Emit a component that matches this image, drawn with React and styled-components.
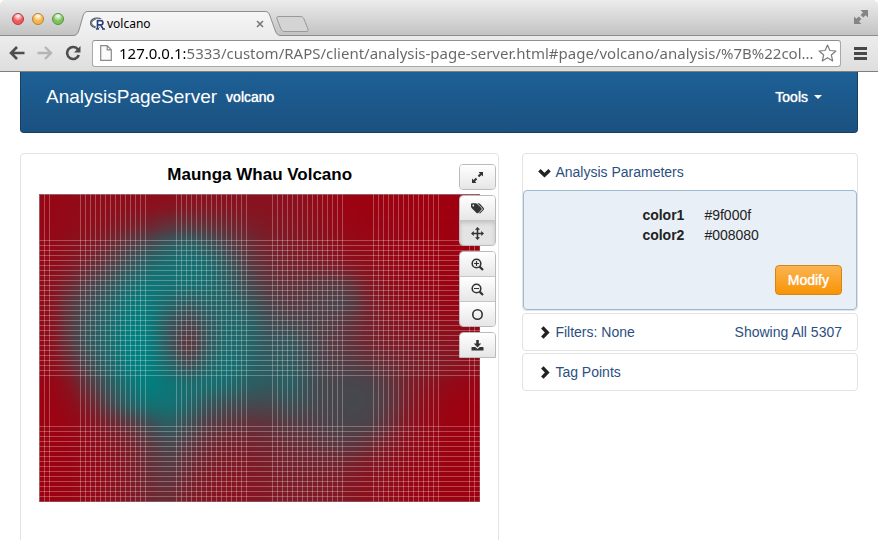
import React, { useState } from 'react';
import styled, { createGlobalStyle } from 'styled-components';

// height of the terrain on a coarse grid, 0 = lowest, 100 = highest
const terrain = [
  [5, 7, 10, 10, 10, 11, 12, 14, 14, 14, 14, 13, 12, 10, 6, 2, 2, 2, 1, 0, 0, 0],
  [5, 8, 10, 14, 20, 26, 36, 38, 34, 28, 22, 18, 16, 13, 8, 4, 3, 3, 2, 1, 1, 0],
  [6, 12, 16, 30, 46, 58, 72, 78, 66, 50, 34, 24, 20, 17, 13, 8, 6, 5, 4, 2, 1, 0],
  [8, 16, 30, 46, 64, 80, 86, 88, 84, 66, 46, 32, 26, 24, 20, 14, 10, 7, 5, 3, 2, 1],
  [10, 30, 50, 64, 82, 92, 88, 88, 84, 74, 56, 42, 38, 42, 46, 42, 18, 10, 8, 5, 3, 2],
  [10, 42, 60, 76, 94, 94, 80, 68, 78, 78, 68, 52, 44, 48, 52, 52, 26, 14, 10, 8, 5, 4],
  [8, 44, 66, 82, 98, 96, 66, 50, 70, 82, 78, 60, 56, 52, 48, 40, 26, 18, 15, 12, 9, 7],
  [8, 42, 68, 82, 100, 98, 66, 36, 70, 84, 78, 66, 70, 56, 46, 40, 28, 22, 20, 18, 14, 10],
  [6, 30, 58, 80, 98, 100, 80, 56, 80, 88, 78, 70, 72, 60, 50, 48, 42, 34, 26, 22, 18, 12],
  [3, 14, 44, 70, 90, 100, 92, 86, 88, 84, 74, 70, 76, 62, 54, 56, 54, 42, 24, 14, 8, 4],
  [2, 8, 24, 54, 78, 90, 90, 80, 66, 60, 58, 56, 62, 58, 54, 56, 56, 44, 20, 8, 3, 1],
  [2, 5, 12, 26, 40, 60, 74, 60, 46, 40, 38, 40, 46, 48, 52, 54, 52, 36, 14, 6, 2, 1],
  [2, 3, 8, 14, 24, 42, 56, 44, 32, 26, 26, 30, 34, 36, 42, 44, 34, 20, 10, 5, 2, 1],
  [1, 3, 7, 12, 20, 36, 48, 34, 24, 20, 20, 24, 27, 28, 28, 26, 18, 12, 7, 4, 2, 1],
  [1, 3, 7, 12, 18, 32, 40, 26, 18, 16, 17, 20, 22, 22, 20, 18, 13, 9, 5, 3, 2, 1],
  [1, 3, 7, 11, 16, 28, 32, 20, 16, 13, 14, 18, 20, 20, 18, 15, 11, 8, 5, 3, 2, 1],
];
const CELL = 20;

const low = [159, 0, 15];
const high = [0, 128, 128];
const mix = value =>
  `rgb(${low.map((c, i) => Math.round(c + ((high[i] - c) * value) / 100)).join(',')})`;

const steps = (from, to) => {
  const list = [];
  for (let n = from; n <= to; n += 5) list.push(n);
  return list;
};
const columnLines = [
  ...steps(5, 10),
  ...steps(41, 106),
  ...steps(137, 207),
  ...steps(233, 303),
  ...steps(334, 399),
  ...steps(430, 435),
];
const rowLines = [...steps(46, 181), ...steps(232, 302)];

const clamp = (n, max) => Math.max(0, Math.min(max, n));

const VolcanoPlot = () => {
  const cells = [];
  // one extra ring of cells so that the smoothing does not fade at the edges
  for (let r = -2; r < terrain.length + 2; r++) {
    for (let c = -2; c < terrain[0].length + 2; c++) {
      const value = terrain[clamp(r, terrain.length - 1)][clamp(c, terrain[0].length - 1)];
      cells.push(
        <rect
          key={`${r}/${c}`}
          x={c * CELL}
          y={r * CELL}
          width={CELL + 1}
          height={CELL + 1}
          fill={mix(value)}
        />
      );
    }
  }
  return (
    <Plot viewBox="0 0 441 308" role="img" aria-label="Maunga Whau Volcano">
      <defs>
        <filter
          id="smooth"
          filterUnits="userSpaceOnUse"
          x="-40"
          y="-40"
          width="520"
          height="400"
          colorInterpolationFilters="sRGB"
        >
          <feGaussianBlur stdDeviation="8" />
        </filter>
      </defs>
      <g filter="url(#smooth)">{cells}</g>
      <g stroke="#fff" strokeOpacity="0.27" shapeRendering="crispEdges">
        {columnLines.map(x => (
          <line key={x} x1={x + 0.5} x2={x + 0.5} y1="0" y2="308" />
        ))}
        {rowLines.map(y => (
          <line key={y} x1="0" x2="441" y1={y + 0.5} y2={y + 0.5} />
        ))}
      </g>
      <rect
        x="0.5"
        y="0.5"
        width="440"
        height="307"
        fill="none"
        stroke="#999"
        strokeOpacity="0.6"
      />
    </Plot>
  );
};

const BrowserWindow = () => (
  <Chrome>
    <TabStrip>
      <Lights>
        <Light type="button" aria-label="Close window" $tone="#f0575a" $edge="#b23a3e" />
        <Light type="button" aria-label="Minimize window" $tone="#f7b544" $edge="#b98233" />
        <Light type="button" aria-label="Zoom window" $tone="#7cc35a" $edge="#57913f" />
      </Lights>
      <Tab>
        <TabShape viewBox="0 0 206 25" preserveAspectRatio="none" aria-hidden="true">
          <defs>
            <linearGradient id="tabFill" x1="0" y1="0" x2="0" y2="1">
              <stop offset="0" stopColor="#f6f6f6" />
              <stop offset="1" stopColor="#ececec" />
            </linearGradient>
          </defs>
          <path
            d="M0 24.500 C3 24 4 22 5 19 L9 5 C10 2 11 .5 14 .5 H191 C194 .5 195 2 196 5 L201 19 C202 22 203 24 206 24.500 V25 H0Z"
            fill="url(#tabFill)"
          />
          <path
            d="M0 24.500 C3 24 4 22 5 19 L9 5 C10 2 11 .5 14 .5 H191 C194 .5 195 2 196 5 L201 19 C202 22 203 24 206 24.500"
            fill="none"
            stroke="#8d8d8d"
          />
        </TabShape>
        <svg width="16" height="14" viewBox="0 0 16 14" aria-hidden="true">
          <ellipse cx="7" cy="6" rx="6" ry="4.300" fill="#fff" stroke="#444b58" strokeWidth="2.200" />
          <ellipse cx="7" cy="6" rx="6" ry="4.300" fill="none" stroke="#aab2c0" strokeWidth=".7" />
          <path
            d="M7.500 12.500V3.700H10.800C13.600 3.700 13.600 7.900 10.800 7.900H7.500M10.600 7.900L13.500 12.500"
            fill="none"
            stroke="#fff"
            strokeWidth="3.600"
          />
          <path
            d="M7.500 12.500V3.700H10.800C13.600 3.700 13.600 7.900 10.800 7.900H7.500M10.600 7.900L13.500 12.500M6 12H9M12 12H15"
            fill="none"
            stroke="#2c3f7c"
            strokeWidth="1.700"
          />
        </svg>
        <TabTitle>volcano</TabTitle>
        <TabClose type="button" aria-label="Close tab">
          <svg width="8" height="8" viewBox="0 0 8 8">
            <path d="M1 1L7 7M7 1L1 7" stroke="#777" strokeWidth="1.600" />
          </svg>
        </TabClose>
      </Tab>
      <NewTab type="button" aria-label="New tab">
        <svg width="33" height="17" viewBox="0 0 33 17">
          <path
            d="M3 .5H24C26 .5 27 1 28 3L32 13C32.500 15 32 15.500 30 15.500H9C7 15.500 6 15 5 13L1 3C.5 1 1 .5 3 .5Z"
            fill="#d4d4d4"
            stroke="#999"
          />
        </svg>
      </NewTab>
      <FullScreen type="button" aria-label="Full screen">
        <svg width="14" height="14" viewBox="0 0 14 14" fill="#858585">
          <path d="M6.500 0H14V7.500L11.600 5.200L9.200 7.600L6.600 5L9 2.600Z" />
          <path d="M0 6.500L2.300 8.800L4.800 6.400L7.400 9L5 11.600L7.400 14H0Z" />
        </svg>
      </FullScreen>
    </TabStrip>
    <AddressRow>
      <NavButtons>
        <button type="button" aria-label="Back">
          <svg width="16" height="14" viewBox="0 0 16 14" fill="none" stroke="#4d4d4d">
            <path d="M8 1L2 7L8 13M2 7H15.500" strokeWidth="2.600" />
          </svg>
        </button>
        <button type="button" aria-label="Forward" disabled>
          <svg width="16" height="14" viewBox="0 0 16 14" fill="none" stroke="#b5b5b5">
            <path d="M8 1L14 7L8 13M14 7H.5" strokeWidth="2.400" />
          </svg>
        </button>
        <button type="button" aria-label="Reload">
          <svg width="16" height="16" viewBox="0 0 16 16">
            <path
              d="M13 4.500A6 6 0 1 0 13.800 10"
              fill="none"
              stroke="#4d4d4d"
              strokeWidth="2.600"
            />
            <path d="M15.500 1V7.500H9Z" fill="#4d4d4d" />
          </svg>
        </button>
      </NavButtons>
      <AddressBox>
        <svg width="12" height="16" viewBox="0 0 12 16" aria-hidden="true">
          <path
            d="M.7.700H7.200L11.300 4.800V15.300H.7ZM7.200.700V4.800H11.300"
            fill="#fafafa"
            stroke="#8a8a8a"
            strokeWidth="1.200"
          />
        </svg>
        <Address
          aria-label="Address"
          defaultValue="127.0.0.1:5333/custom/RAPS/client/analysis-page-server.html#page/volcano/analysis/%7B%22col..."
        />
        <BookmarkButton type="button" aria-label="Bookmark this page">
          <svg width="19" height="18" viewBox="0 0 19 18">
            <path
              d="M9.500 1L11.900 6.500L17.900 7L13.300 11L14.700 16.900L9.500 13.700L4.300 16.900L5.700 11L1.100 7L7.100 6.500Z"
              fill="#fff"
              stroke="#7d7d7d"
              strokeWidth="1.200"
              strokeLinejoin="round"
            />
          </svg>
        </BookmarkButton>
      </AddressBox>
      <MenuButton type="button" aria-label="Menu">
        <svg width="13" height="13" viewBox="0 0 13 13">
          <path d="M0 1.500H13M0 6.500H13M0 11.500H13" stroke="#484848" strokeWidth="3" />
        </svg>
      </MenuButton>
    </AddressRow>
  </Chrome>
);

const plotTools = [
  [
    {
      label: 'Resize',
      icon: (
        <>
          <path d="M7.500 1H12V5.500L10.500 4L8.200 6.300L6.700 4.800L9 2.500Z" />
          <path d="M1 7.500L2.500 9L4.800 6.700L6.300 8.200L4 10.500L5.500 12H1Z" />
        </>
      ),
    },
  ],
  [
    {
      label: 'Tag',
      icon: (
        <>
          <path
            fillRule="evenodd"
            d="M0 2.300Q0 1.200 1 1.200H4.700Q5.500 1.200 6.200 1.900L10.400 6.100Q11.200 7 10.400 7.800L7.200 11Q6.400 11.700 5.600 11L.8 6.200Q0 5.400 0 4.500ZM2.300 2.600A.9 .9 0 1 0 2.300 4.400A.9 .9 0 1 0 2.300 2.600Z"
          />
          <path d="M6.300 1.200H7.600Q8.300 1.200 8.900 1.800L12.700 6.100Q13.400 7 12.700 7.800L9.300 11.200Q8.700 11.700 8 11L11.400 7.800Q12.100 7 11.400 6.200Z" />
        </>
      ),
    },
    {
      label: 'Pan',
      pressed: true,
      icon: (
        <path d="M6.500 0L9 2.800H7.300V5.700H10.200V4L13 6.500L10.200 9V7.300H7.300V10.200H9L6.500 13L4 10.200H5.700V7.300H2.800V9L0 6.500L2.800 4V5.700H5.700V2.800H4Z" />
      ),
    },
  ],
  [
    {
      label: 'Zoom in',
      icon: (
        <g fill="none" stroke="#333">
          <circle cx="5.500" cy="5.500" r="4.300" strokeWidth="1.600" />
          <path d="M8.600 8.600L12 12" strokeWidth="2.200" />
          <path d="M3 5.500H8M5.500 3V8" strokeWidth="1.200" />
        </g>
      ),
    },
    {
      label: 'Zoom out',
      icon: (
        <g fill="none" stroke="#333">
          <circle cx="5.500" cy="5.500" r="4.300" strokeWidth="1.600" />
          <path d="M8.600 8.600L12 12" strokeWidth="2.200" />
          <path d="M3 5.500H8" strokeWidth="1.200" />
        </g>
      ),
    },
    {
      label: 'Reset zoom',
      icon: <circle cx="6.500" cy="6.500" r="4.700" fill="none" stroke="#333" strokeWidth="1.600" />,
    },
  ],
  [
    {
      label: 'Download',
      icon: (
        <>
          <path d="M5.200 1H7.800V4.500H10.300L6.500 8.400L2.700 4.500H5.200Z" />
          <path d="M1 8H4.300L6.500 10L8.700 8H12Q12.500 8 12.500 8.500V11.500H.5V8.500Q.5 8 1 8Z" />
        </>
      ),
    },
  ],
];

const Chevron = ({ open }) => (
  <ChevronIcon viewBox="0 0 12 12" aria-hidden="true">
    {open ? (
      <path d="M1.300 4L6 8.500L10.700 4" fill="none" stroke="#222" strokeWidth="3.200" />
    ) : (
      <path d="M4 1.300L8.500 6L4 10.700" fill="none" stroke="#222" strokeWidth="3.200" />
    )}
  </ChevronIcon>
);

const App = () => {
  const [open, setOpen] = useState(true);
  return (
    <>
      <GlobalStyle />
      <BrowserWindow />
      <Page>
        <Navbar>
          <Brand href="#home">AnalysisPageServer</Brand>
          <NavLink href="#volcano">volcano</NavLink>
          <ToolsMenu type="button" aria-haspopup="menu">
            Tools
            <Caret />
          </ToolsMenu>
        </Navbar>
        <Columns>
          <PlotCard>
            <PlotTitle>Maunga Whau Volcano</PlotTitle>
            <VolcanoPlot />
            <PlotTools>
              {plotTools.map((group, i) => (
                <ToolGroup key={i}>
                  {group.map(tool => (
                    <ToolButton
                      key={tool.label}
                      type="button"
                      aria-label={tool.label}
                      $pressed={tool.pressed}
                    >
                      <svg width="13" height="13" viewBox="0 0 13 13" fill="#333">
                        {tool.icon}
                      </svg>
                    </ToolButton>
                  ))}
                </ToolGroup>
              ))}
            </PlotTools>
          </PlotCard>
          <Sidebar>
            <Panel>
              <PanelHeader type="button" aria-expanded={open} onClick={() => setOpen(!open)}>
                <Chevron open={open} />
                Analysis Parameters
              </PanelHeader>
              {open && (
                <PanelBody>
                  <Parameters>
                    <dt>color1</dt>
                    <dd>#9f000f</dd>
                    <dt>color2</dt>
                    <dd>#008080</dd>
                  </Parameters>
                  <Modify type="button">Modify</Modify>
                </PanelBody>
              )}
            </Panel>
            <Panel>
              <PanelHeader type="button">
                <Chevron />
                Filters: None
                <Count>Showing All 5307</Count>
              </PanelHeader>
            </Panel>
            <Panel>
              <PanelHeader type="button">
                <Chevron />
                Tag Points
              </PanelHeader>
            </Panel>
          </Sidebar>
        </Columns>
      </Page>
    </>
  );
};

const GlobalStyle = createGlobalStyle`
  * {
    box-sizing: border-box;
  }
  html {
    height: 100%;
    overflow: hidden;
  }
  body {
    margin: 0;
    height: 100%;
    background: #fff;
    color: #333;
    font-family: 'Liberation Sans', Arial, sans-serif;
    font-size: 14px;
    line-height: 20px;
  }
  button {
    margin: 0;
    padding: 0;
    border: none;
    background: none;
    font: inherit;
    cursor: pointer;
  }
  svg {
    display: block;
    flex-shrink: 0;
  }
`;
const Chrome = styled.header`
  border-radius: 5px 5px 0 0;
  overflow: hidden;
  border-bottom: 1px solid #7c8080;
  font-family: 'Noto Sans', 'Open Sans', sans-serif;
`;
const TabStrip = styled.div`
  display: flex;
  align-items: flex-end;
  height: 36px;
  padding: 0 10px 0 12px;
  background: linear-gradient(#ececec, #c2c2c2);
  box-shadow: inset 0 -1px #8d8d8d;
`;
const Lights = styled.div`
  display: flex;
  gap: 8px;
  width: 62px;
  margin-bottom: 11px;
`;
const Light = styled.button`
  width: 12px;
  height: 12px;
  border: 1px solid ${props => props.$edge};
  border-radius: 50%;
  background: radial-gradient(circle at 50% 20%, #fff 0, ${props => props.$tone} 55%);
`;
const Tab = styled.div`
  display: flex;
  position: relative;
  align-items: center;
  gap: 1px;
  width: 206px;
  height: 25px;
  padding: 0 16px;
  z-index: 0;
`;
const TabShape = styled.svg`
  position: absolute;
  inset: 0;
  width: 100%;
  height: 100%;
  z-index: -1;
`;
const TabTitle = styled.span`
  flex: 1;
  font-size: 12px;
  color: #000;
`;
const TabClose = styled.button`
  padding: 0;
`;
const NewTab = styled.button`
  margin: 0 0 3px -4px;
`;
const FullScreen = styled.button`
  margin-left: auto;
  margin-bottom: 12px;
`;
const AddressRow = styled.div`
  display: flex;
  align-items: center;
  height: 35px;
  padding: 0 11px 1px 9px;
  background: linear-gradient(#ececec, #dedede);
`;
const NavButtons = styled.div`
  display: flex;
  align-items: center;
  gap: 12px;
  margin-right: 11px;
`;
const AddressBox = styled.div`
  display: flex;
  flex: 1;
  align-items: center;
  min-width: 0;
  height: 27px;
  margin-right: 13px;
  padding: 0 3px 0 7px;
  border: 1px solid #a8a8a8;
  border-top-color: #8f8f8f;
  border-radius: 3px;
  background: #fff;
`;
/* the host is darker than the rest of the address */
const Address = styled.input`
  flex: 1;
  min-width: 0;
  padding: 0 0 0 7px;
  border: none;
  outline: none;
  font-family: inherit;
  font-size: 15px;
  line-height: 22px;
  color: transparent;
  background: linear-gradient(to right, #000 73px, #666 73px);
  -webkit-background-clip: text;
  background-clip: text;
`;
const BookmarkButton = styled.button`
  flex-shrink: 0;
`;
const MenuButton = styled.button`
  flex-shrink: 0;
`;
const Page = styled.main`
  padding: 0 20px;
`;
const Navbar = styled.nav`
  display: flex;
  align-items: center;
  height: 61px;
  padding: 0 35px 10px 25px;
  border: 1px solid #163f63;
  border-top: none;
  border-radius: 0 0 4px 4px;
  background: linear-gradient(#1d6096, #1b5180);
`;
const Brand = styled.a`
  margin-right: 9px;
  font-size: 19px;
  color: #fff;
  text-decoration: none;
`;
const NavLink = styled.a`
  color: #fff;
  text-decoration: none;
  text-shadow: 0 0 1px #fff;
`;
const ToolsMenu = styled.button`
  display: flex;
  align-items: center;
  gap: 6px;
  margin-left: auto;
  color: #fff;
  text-shadow: 0 0 1px #fff;
`;
const Caret = styled.span`
  border: 4px solid transparent;
  border-top-color: #fff;
  border-bottom: none;
`;
const Columns = styled.div`
  display: grid;
  grid-template-columns: 10fr 7fr;
  align-items: start;
  gap: 23px;
  margin-top: 20px;
`;
const PlotCard = styled.section`
  position: relative;
  min-height: 400px;
  padding: 10px 18px;
  border: 1px solid #e3e3e3;
  border-radius: 4px;
`;
const PlotTitle = styled.h1`
  margin: 0 0 8px;
  font-size: 17px;
  line-height: 22px;
  text-align: center;
  color: #000;
`;
const Plot = styled.svg`
  width: 100%;
`;
const PlotTools = styled.div`
  position: absolute;
  top: 10px;
  right: 2px;
  display: flex;
  flex-direction: column;
  gap: 5px;
`;
const ToolGroup = styled.div`
  display: flex;
  flex-direction: column;
  border: 1px solid #bbb;
  border-radius: 4px;
  overflow: hidden;

  &:last-child {
    border-radius: 4px 4px 0 0;
  }
`;
const ToolButton = styled.button`
  display: flex;
  align-items: center;
  justify-content: center;
  width: 35px;
  height: 24px;
  background: ${props => (props.$pressed ? '#e4e4e4' : 'linear-gradient(#fff, #e6e6e6)')};
  box-shadow: ${props => (props.$pressed ? 'inset 0 2px 4px rgba(0, 0, 0, 0.15)' : 'none')};

  & + & {
    height: 25px;
    border-top: 1px solid #c5c5c5;
  }
`;
const Sidebar = styled.aside`
  display: flex;
  flex-direction: column;
  gap: 2px;
`;
const Panel = styled.section`
  border: 1px solid #e3e3e3;
  border-radius: 4px;
`;
const PanelHeader = styled.button`
  display: flex;
  align-items: center;
  gap: 4px;
  width: 100%;
  padding: 8px 15px;
  text-align: left;
  color: #2b4f81;
`;
const ChevronIcon = styled.svg`
  width: 13px;
  height: 13px;
`;
const Count = styled.span`
  margin-left: auto;
`;
const PanelBody = styled.div`
  display: flex;
  flex-direction: column;
  align-items: flex-end;
  gap: 20px;
  padding: 14px;
  border: 1px solid #9dbad3;
  border-radius: 4px;
  background: #e8eff6;
`;
const Parameters = styled.dl`
  display: grid;
  grid-template-columns: 146px 1fr;
  column-gap: 20px;
  align-self: stretch;
  margin: 0;
  color: #222;

  dt {
    font-weight: bold;
    text-align: right;
  }
  dd {
    margin: 0;
  }
`;
const Modify = styled.button`
  padding: 4px 12px;
  border: 1px solid #d58512;
  border-radius: 4px;
  color: #fff;
  text-shadow: 0 0 1px #fff;
  background: linear-gradient(#fbb450, #f89406);
`;

export default App;
